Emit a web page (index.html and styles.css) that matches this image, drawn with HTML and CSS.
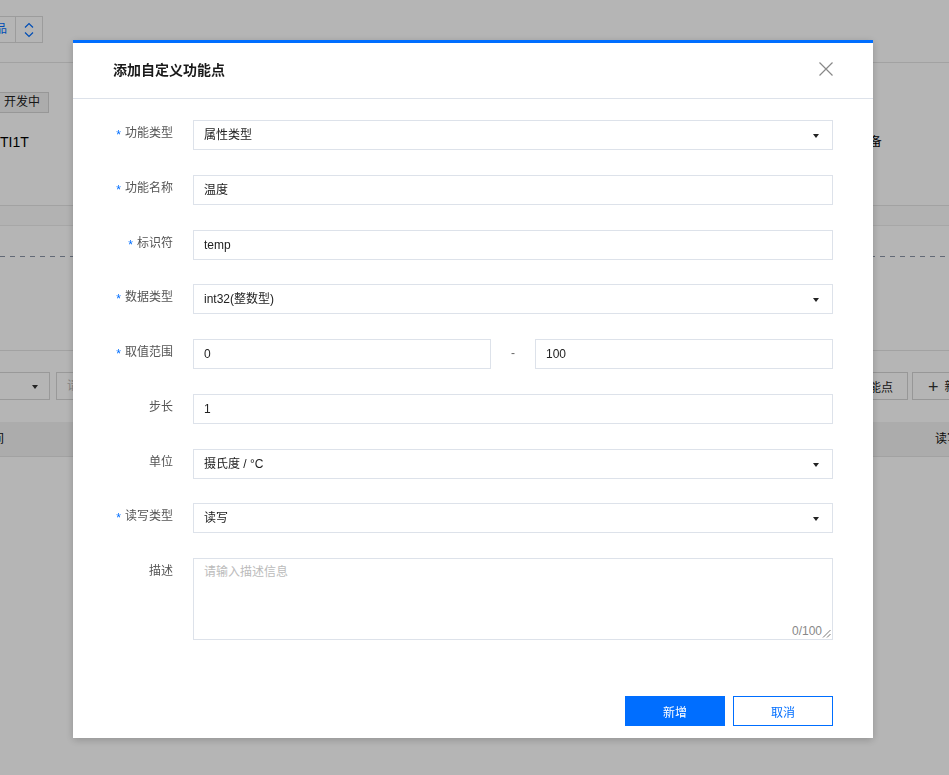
FILE: index.html
```html
<!DOCTYPE html>
<html lang="zh-CN">
<head>
<meta charset="utf-8">
<title>添加自定义功能点</title>
<link rel="stylesheet" href="styles.css">
</head>
<body>
<div class="page">
  <header class="topbar">
    <div class="prod-switch">
      <span class="prod-name">产品</span>
      <span class="prod-toggle">
        <svg width="10" height="16" viewBox="0 0 10 16"><path d="M1 5.5 L5 1.5 L9 5.5 M1 10.5 L5 14.5 L9 10.5" fill="none" stroke="#006eff" stroke-width="1.2"/></svg>
      </span>
    </div>
  </header>

  <section class="card info-card">
    <span class="status-tag">开发中</span>
    <div class="info-row">
      <span class="info-id">TI1T</span>
      <span class="info-type">设备</span>
    </div>
  </section>

  <section class="card steps-card">
    <div class="dash-line"></div>
  </section>

  <section class="card list-card">
    <div class="toolbar">
      <div class="tb-left">
        <div class="tb-select"><span class="tb-caret"></span></div>
        <div class="tb-input">请输入功能名称</div>
      </div>
      <div class="tb-right">
        <button class="tb-btn">新建标准功能点</button>
        <button class="tb-btn tb-add"><span class="plus">+</span>新增</button>
      </div>
    </div>
    <div class="thead">
      <span class="th-left">时间</span>
      <span class="th-right">读写</span>
    </div>
  </section>
</div>

<div class="mask">
  <div class="modal">
    <div class="modal-header">
      <h2 class="modal-title">添加自定义功能点</h2>
      <button class="modal-close" aria-label="关闭">
        <svg width="14" height="14" viewBox="0 0 14 14"><path d="M0.5 0.5 L13.5 13.5 M13.5 0.5 L0.5 13.5" stroke="#888" stroke-width="1.2" fill="none"/></svg>
      </button>
    </div>

    <div class="modal-body">
      <div class="form-row">
        <label class="form-label required">功能类型</label>
        <div class="field select">属性类型<span class="caret"></span></div>
      </div>
      <div class="form-row">
        <label class="form-label required">功能名称</label>
        <div class="field">温度</div>
      </div>
      <div class="form-row">
        <label class="form-label required">标识符</label>
        <div class="field">temp</div>
      </div>
      <div class="form-row">
        <label class="form-label required">数据类型</label>
        <div class="field select">int32(整数型)<span class="caret"></span></div>
      </div>
      <div class="form-row">
        <label class="form-label required">取值范围</label>
        <div class="range">
          <div class="field">0</div>
          <span class="range-sep">-</span>
          <div class="field">100</div>
        </div>
      </div>
      <div class="form-row">
        <label class="form-label">步长</label>
        <div class="field">1</div>
      </div>
      <div class="form-row">
        <label class="form-label">单位</label>
        <div class="field select">摄氏度 / °C<span class="caret"></span></div>
      </div>
      <div class="form-row">
        <label class="form-label required">读写类型</label>
        <div class="field select">读写<span class="caret"></span></div>
      </div>
      <div class="form-row">
        <label class="form-label">描述</label>
        <div class="field textarea">
          <span class="placeholder">请输入描述信息</span>
          <span class="counter">0/100</span>
          <svg class="grip" width="9" height="9" viewBox="0 0 9 9"><path d="M8.5 1 L1 8.5 M8.5 5 L5 8.5" stroke="#777" stroke-width="1" fill="none"/></svg>
        </div>
      </div>
    </div>

    <div class="modal-footer">
      <button class="btn btn-primary">新增</button>
      <button class="btn btn-default">取消</button>
    </div>
  </div>
</div>
</body>
</html>
```

FILE: styles.css
```css
* {
  box-sizing: border-box;
}

html,
body {
  margin: 0;
  padding: 0;
}

body {
  width: 949px;
  height: 775px;
  overflow: hidden;
  font-family: "Liberation Sans", "Noto Sans CJK SC", sans-serif;
  font-size: 12px;
  color: #333;
  background: #fbfbfb;
}

button {
  font-family: inherit;
  font-size: 12px;
  cursor: pointer;
}

/* ---------- underlying page ---------- */
.page {
  width: 949px;
  height: 775px;
  overflow: hidden;
  background: #fbfbfb;
}

.topbar {
  height: 63px;
  padding-top: 16px;
  background: #fff;
  border-bottom: 1px solid #e4e4e4;
}

.prod-switch {
  display: flex;
  height: 27px;
}

.prod-name {
  margin-left: -26px;
  padding: 0 8px;
  border: 1px solid #dcdcdc;
  line-height: 25px;
  color: #006eff;
}

.prod-toggle {
  display: flex;
  align-items: center;
  justify-content: center;
  width: 27px;
  border: 1px solid #dcdcdc;
  border-left: none;
}

.card {
  background: #fff;
}

.info-card {
  height: 143px;
  padding-top: 29px;
  border-bottom: 1px solid #e4e4e4;
}

.status-tag {
  display: inline-block;
  margin-left: -5px;
  padding: 0 8px;
  height: 21px;
  line-height: 19px;
  border: 1px solid #d5d5d5;
  background: #f3f3f3;
  color: #222;
}

.info-row {
  display: flex;
  margin-top: 19px;
  font-size: 14px;
  line-height: 20px;
  color: #000;
}

.info-type {
  margin-left: 829px;
  font-size: 12px;
}

.steps-card {
  margin-top: 19px;
  height: 125px;
  padding-top: 30px;
  border-top: 1px solid #ececec;
}

.dash-line {
  height: 1px;
  background: repeating-linear-gradient(to right, #8a94a6 0 5px, transparent 5px 10px);
}

.list-card {
  height: 426px;
  border-top: 1px solid #e4e4e4;
  padding-top: 21px;
}

.toolbar {
  display: flex;
  justify-content: space-between;
  height: 28px;
}

.tb-left {
  display: flex;
  gap: 6px;
}

.tb-select {
  position: relative;
  width: 130px;
  margin-left: -80px;
  border: 1px solid #d8d8d8;
}

.tb-caret {
  position: absolute;
  right: 11px;
  top: 12px;
  border-top: 4px solid #333;
  border-left: 3.5px solid transparent;
  border-right: 3.5px solid transparent;
}

.tb-input {
  width: 220px;
  padding-left: 10px;
  line-height: 26px;
  border: 1px solid #d8d8d8;
  color: #bbb;
  white-space: nowrap;
}

.tb-right {
  display: flex;
  gap: 4px;
  margin-right: -25px;
}

.tb-btn {
  height: 28px;
  padding: 0 14px;
  border: 1px solid #d5d5d5;
  background: #fff;
  color: #222;
  white-space: nowrap;
}

.tb-add {
  width: 62px;
  padding-left: 15px;
  text-align: left;
}

.plus {
  font-size: 18px;
  line-height: 1;
  margin-right: 6px;
  vertical-align: -2px;
  color: #333;
}

.thead {
  display: flex;
  justify-content: space-between;
  height: 35px;
  margin-top: 22px;
  background: #f2f2f2;
  border-bottom: 1px solid #e4e4e4;
  line-height: 34px;
  color: #111;
}

.th-left {
  margin-left: -20px;
}

.th-right {
  margin-right: -10px;
}

/* ---------- mask + modal ---------- */
.mask {
  position: fixed;
  inset: 0;
  padding: 40px 0 0 73px;
  background: rgba(0, 0, 0, 0.29);
}

.modal {
  width: 800px;
  height: 698px;
  display: flex;
  flex-direction: column;
  background: #fff;
  border-top: 3px solid #006eff;
  box-shadow: 0 2px 8px rgba(0, 0, 0, 0.2);
}

.modal-header {
  display: flex;
  align-items: center;
  justify-content: space-between;
  height: 56px;
  padding: 0 40px 3px;
  border-bottom: 1px solid #dde2ea;
}

.modal-title {
  margin: 0;
  font-size: 14px;
  font-weight: bold;
  color: #1a1a1a;
}

.modal-close {
  display: flex;
  padding: 0;
  border: none;
  background: none;
}

.modal-body {
  display: flex;
  flex-direction: column;
  gap: 24.75px;
  padding: 21px 40px 0;
}

.form-row {
  display: flex;
}

.form-label {
  width: 60px;
  margin-right: 20px;
  flex-shrink: 0;
  text-align: right;
  line-height: 26px;
  color: #555;
}

.form-label.required::before {
  content: "*";
  margin-right: 4px;
  color: #006eff;
  vertical-align: -2px;
}

.field {
  position: relative;
  width: 640px;
  height: 30px;
  padding: 0 10px;
  border: 1px solid #dde2ea;
  line-height: 29px;
  color: #222;
  background: #fff;
}

.caret {
  position: absolute;
  right: 13px;
  top: 13px;
  border-top: 4px solid #222;
  border-left: 3.5px solid transparent;
  border-right: 3.5px solid transparent;
}

.range {
  display: flex;
  width: 640px;
}

.range .field {
  width: 298px;
}

.range-sep {
  width: 44px;
  text-align: center;
  line-height: 28px;
  color: #666;
}

.textarea {
  height: 82px;
  line-height: 27px;
}

.placeholder {
  color: #bbb;
}

.counter {
  position: absolute;
  right: 10px;
  bottom: 0;
  line-height: 16px;
  color: #888;
}

.grip {
  position: absolute;
  right: 1px;
  bottom: 1px;
}

.modal-footer {
  display: flex;
  justify-content: flex-end;
  gap: 8px;
  margin-top: auto;
  padding: 0 40px 12px;
}

.btn {
  width: 100px;
  height: 30px;
  padding: 0;
  border: 1px solid #006eff;
}

.btn-primary {
  background: #006eff;
  color: #fff;
}

.btn-default {
  background: #fff;
  color: #006eff;
}
```
